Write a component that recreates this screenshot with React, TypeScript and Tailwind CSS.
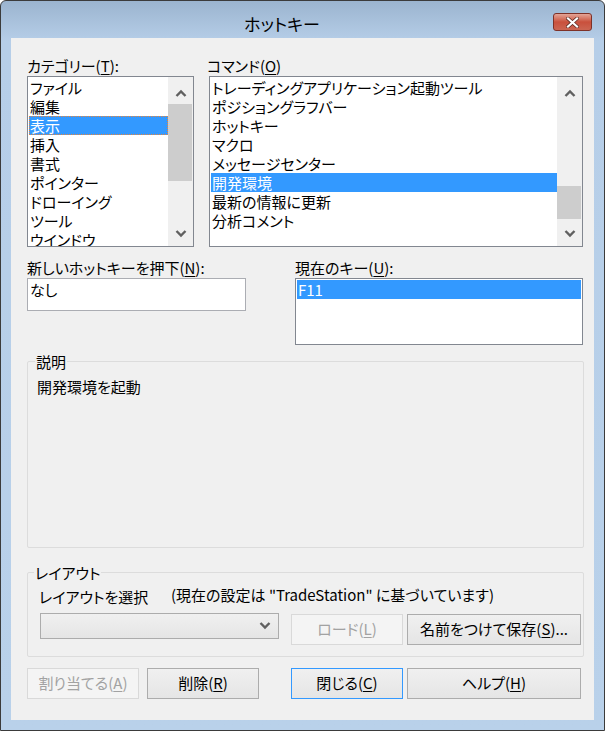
import type { ReactNode } from "react";

const categories = [
  "ファイル",
  "編集",
  "表示",
  "挿入",
  "書式",
  "ポインター",
  "ドローイング",
  "ツール",
  "ウインドウ",
];

const commands = [
  "トレーディングアプリケーション起動ツール",
  "ポジショングラフバー",
  "ホットキー",
  "マクロ",
  "メッセージセンター",
  "開発環境",
  "最新の情報に更新",
  "分析コメント",
];

function Chevron({ up }: { up?: boolean }) {
  return (
    <svg width="12" height="8" viewBox="0 0 12 8">
      <polyline
        points={up ? "1.5,7 6,2.5 10.5,7" : "1.5,1 6,5.5 10.5,1"}
        fill="none"
        stroke="#606060"
        strokeWidth="2.4"
      />
    </svg>
  );
}

function ScrollBar({ thumb }: { thumb: string }) {
  return (
    <div className="flex w-[25px] flex-col bg-[#f0f0f0]">
      <div className="flex h-[27px] justify-center pt-[12px]">
        <Chevron up />
      </div>
      <div className="flex-1">
        <div className={`mr-[1px] bg-[#cdcdcd] ${thumb}`} />
      </div>
      <div className="flex h-[25px] items-center justify-center">
        <Chevron />
      </div>
    </div>
  );
}

function Label({ text, k, colon = true }: { text: string; k: string; colon?: boolean }) {
  return (
    <div className="h-[21px] whitespace-nowrap leading-[21px]">
      {text}(<span className="underline underline-offset-2">{k}</span>){colon ? ":" : ""}
    </div>
  );
}

function ListRows({ items, selected, focus }: { items: string[]; selected: number; focus?: boolean }) {
  return (
    <div className="min-w-0 flex-1 overflow-hidden pt-[1px] pl-[1px]">
      {items.map((item, i) => (
        <div
          key={item}
          className={`h-[19px] whitespace-nowrap pl-[1px] leading-[19px] ${
            i === selected ? "bg-[#3399ff] text-white" : ""
          } ${i === selected && focus ? "outline-1 -outline-offset-1 outline-dotted outline-[#e8853a]" : ""}`}
        >
          {item}
        </div>
      ))}
    </div>
  );
}

function Button({
  children,
  className = "",
  disabled,
  focused,
}: {
  children: ReactNode;
  className?: string;
  disabled?: boolean;
  focused?: boolean;
}) {
  const tone = disabled
    ? "border-[#d9d9d9] bg-[#f4f4f4] text-[#a2a2a2]"
    : focused
      ? "border-[#3399ff] bg-linear-to-b from-[#f0f0f0] to-[#e5e5e5] text-black"
      : "border-[#acacac] bg-linear-to-b from-[#f0f0f0] to-[#e5e5e5] text-black";
  return (
    <div className={`flex h-[31px] items-center justify-center border whitespace-nowrap ${tone} ${className}`}>
      {children}
    </div>
  );
}

function U({ children }: { children: ReactNode }) {
  return <span className="underline underline-offset-2">{children}</span>;
}

export default function App() {
  return (
    <div className="font-['Noto_Sans_CJK_JP','Noto_Sans',sans-serif] text-[15px] text-black [font-feature-settings:'palt'_1]">
      <div className="flex h-[731px] w-[605px] flex-col rounded-t-[6px] border border-[#3b3b3b] bg-[linear-gradient(to_bottom,#9bb4cf_0px,#b6cee8_40px,#b9d1ea_100%)]">
        {/* title bar */}
        <div className="flex h-[37px] items-start">
          <div className="flex-1 pt-[11px] pl-[10px] text-center text-[17px] leading-[24px]">ホットキー</div>
          <div className="mt-[12px] mr-[12px] flex h-[18px] w-[39px] items-center justify-center rounded-[3px] border border-[#7e3127] bg-linear-to-b from-[#e3a497] via-[#c9503c] to-[#cb6552]">
            <svg width="13" height="11" viewBox="0 0 13 11">
              <path d="M2 1.5 L11 9.5 M11 1.5 L2 9.5" stroke="#5a2a22" strokeWidth="3.6" strokeLinecap="square" />
              <path d="M2 1.5 L11 9.5 M11 1.5 L2 9.5" stroke="#ffffff" strokeWidth="2.2" strokeLinecap="square" />
            </svg>
          </div>
        </div>

        {/* client area */}
        <div className="mx-[10px] flex h-[682px] flex-col bg-[#f0f0f0] pt-[17px] pr-[10px] pl-[16px]">
          {/* lists */}
          <div className="flex gap-[15px]">
            <div className="w-[167px]">
              <Label text="カテゴリー" k="T" />
              <div className="flex h-[171px] border border-[#828790] bg-white">
                <ListRows items={categories} selected={2} focus />
                <ScrollBar thumb="h-[77px]" />
              </div>
            </div>
            <div className="w-[374px]">
              <div className="-ml-[2px]">
                <Label text="コマンド" k="O" colon={false} />
              </div>
              <div className="flex h-[171px] border border-[#828790] bg-white">
                <ListRows items={commands} selected={5} />
                <ScrollBar thumb="mt-[82px] h-[33px]" />
              </div>
            </div>
          </div>

          {/* hotkey row */}
          <div className="mt-[10px] flex items-start gap-[49px]">
            <div className="w-[219px]">
              <Label text="新しいホットキーを押下" k="N" />
              <div className="h-[33px] border border-[#abadb3] bg-white pt-[1px] pl-[2px] leading-[19px]">なし</div>
            </div>
            <div className="w-[288px]">
              <Label text="現在のキー" k="U" />
              <div className="h-[67px] border border-[#828790] bg-white p-[1px]">
                <div className="h-[19px] bg-[#3399ff] pl-[1px] leading-[19px] text-white">F11</div>
              </div>
            </div>
          </div>

          {/* description */}
          <fieldset className="mt-[6px] h-[197px] rounded-[2px] border border-[#dcdcdc]">
            <legend className="ml-[7px] px-[1px] leading-[21px]">説明</legend>
            <div className="mt-[5px] pl-[9px] leading-[19px]">開発環境を起動</div>
          </fieldset>

          {/* layout */}
          <fieldset className="mt-[14px] h-[95px] rounded-[2px] border border-[#dcdcdc]">
            <legend className="ml-[6px] px-[1px] leading-[21px]">レイアウト</legend>
            <div className="pl-[12px]">
              <div className="mt-[4px] flex items-start">
                <div className="-ml-[1px] w-[132px] leading-[19px]">レイアウトを選択</div>
                <div className="-mt-[2px] leading-[19px] whitespace-nowrap">
                  (現在の設定は "TradeStation" に基づいています)
                </div>
              </div>
              <div className="mt-[7px] flex items-start">
                <div className="flex h-[26px] w-[239px] items-center justify-end border border-[#acacac] bg-linear-to-b from-[#f0f0f0] to-[#e5e5e5] pr-[7px]">
                  <Chevron />
                </div>
                <Button disabled className="mt-[1px] ml-[12px] w-[112px]">
                  ロード(<U>L</U>)
                </Button>
                <Button className="mt-[1px] ml-[4px] w-[174px]">
                  名前をつけて保存(<U>S</U>)...
                </Button>
              </div>
            </div>
          </fieldset>

          {/* bottom buttons */}
          <div className="mt-[11px] flex">
            <Button disabled className="w-[112px]">
              割り当てる(<U>A</U>)
            </Button>
            <Button className="ml-[8px] w-[112px]">
              削除(<U>R</U>)
            </Button>
            <Button focused className="ml-[32px] w-[112px]">
              閉じる(<U>C</U>)
            </Button>
            <Button className="ml-[4px] w-[174px]">
              ヘルプ(<U>H</U>)
            </Button>
          </div>
        </div>
      </div>
    </div>
  );
}
